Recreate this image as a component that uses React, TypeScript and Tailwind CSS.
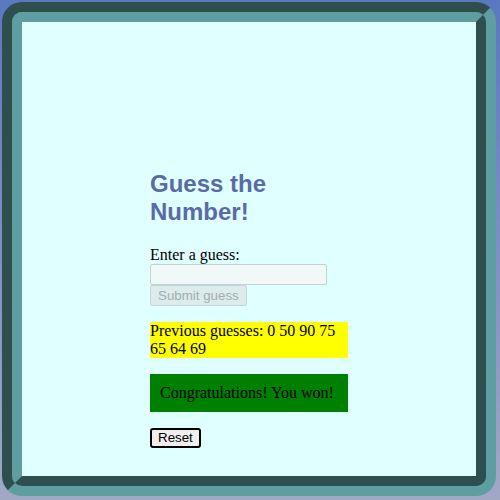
export default function App() {
  return (
    <div className="w-[500px] h-[500px] bg-gradient-to-b from-[#5a78c0] to-[#a0a8c4] p-[2px]">
      {/* groove frame: dark/teal outer ring, teal/dark inner ring */}
      <div className="w-[494px] h-[494px] rounded-[20px] border-[10px] border-t-[#2f4f4f] border-l-[#2f4f4f] border-b-[#5f9ea0] border-r-[#5f9ea0]">
        <div className="w-full h-full rounded-[10px] border-[10px] border-t-[#5f9ea0] border-l-[#5f9ea0] border-b-[#2f4f4f] border-r-[#2f4f4f] bg-[#e0ffff] flex items-center justify-center">
          <div className="w-[198px] h-[198px] font-['Liberation_Serif',serif] text-[16px] leading-[normal] text-black">
            <h2 className="my-[19.92px] font-['Liberation_Sans',Arial,sans-serif] text-[24px] font-bold leading-[normal] text-[#5a6aa8]">
              Guess the Number!
            </h2>
            <label htmlFor="guess" className="block">
              Enter a guess:
            </label>
            <input
              id="guess"
              type="text"
              className="block w-[177px] h-[21px] rounded-[2px] border border-[#c3d3d3] bg-[#f0f8f8] px-[2px] font-['Liberation_Sans',Arial,sans-serif] text-[13.33px] outline-none"
            />
            <button
              disabled
              className="block h-[21px] px-[7px] rounded-[2px] border border-[#c5d5d5] bg-[#dcecec] text-[#a3adad] font-['Liberation_Sans',Arial,sans-serif] text-[13.33px] leading-none"
            >
              Submit guess
            </button>
            <p className="my-4 bg-[#ffff00]">Previous guesses: 0 50 90 75 65 64 69</p>
            <p className="my-4 bg-[#008000] p-[10px]">Congratulations! You won!</p>
            <button className="block h-[20px] px-[6px] rounded-[3px] border-2 border-black bg-[#efefef] font-['Liberation_Sans',Arial,sans-serif] text-[13.33px] leading-none">
              Reset
            </button>
          </div>
        </div>
      </div>
    </div>
  )
}
